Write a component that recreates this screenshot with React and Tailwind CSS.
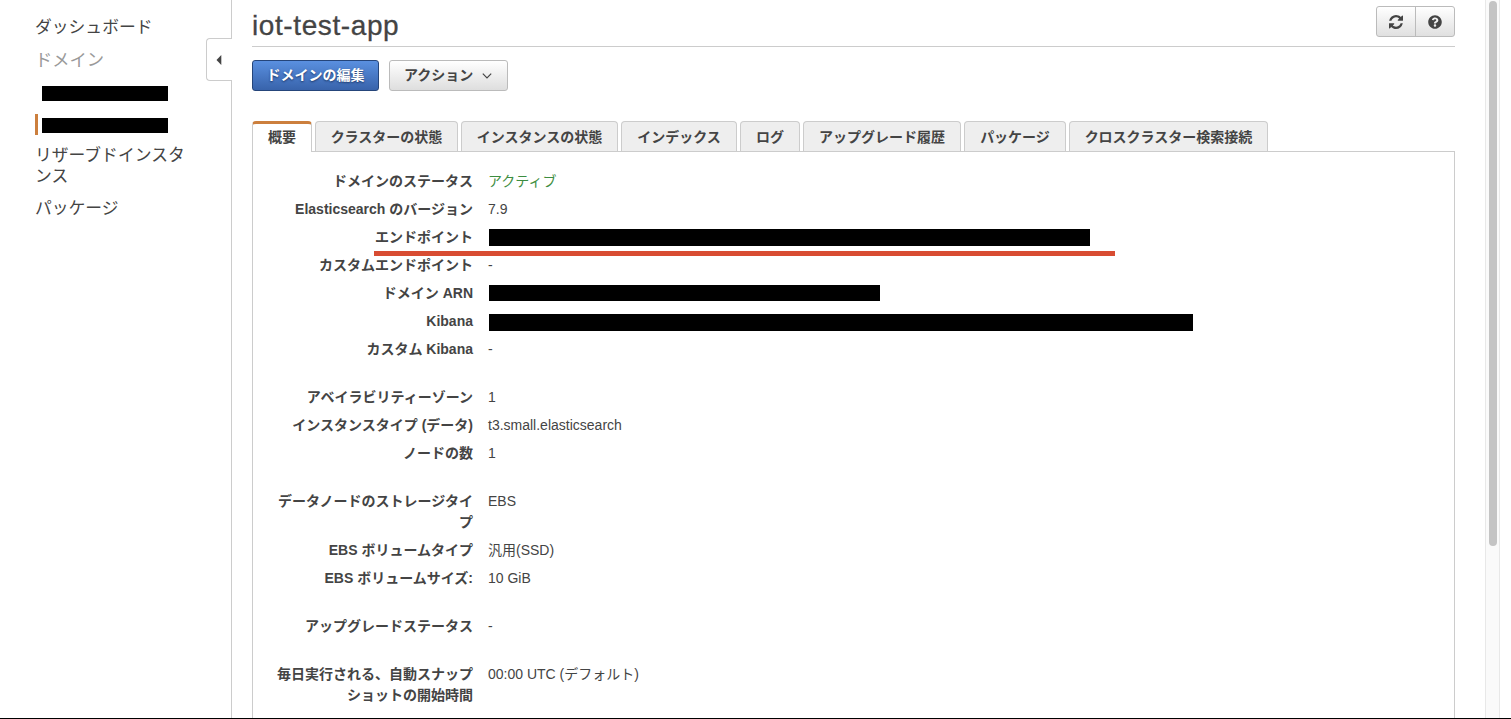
import { FaQuestionCircle } from "react-icons/fa";

const TABS = [
  { label: "クラスターの状態", width: "w-[143px]" },
  { label: "インスタンスの状態", width: "w-[157px]" },
  { label: "インデックス", width: "w-[116px]" },
  { label: "ログ", width: "w-[60px]" },
  { label: "アップグレード履歴", width: "w-[158px]" },
  { label: "パッケージ", width: "w-[102px]" },
  { label: "クロスクラスター検索接続", width: "w-[199px]" },
];

const SECTIONS = [
  [
    { label: "ドメインのステータス", value: "アクティブ", tone: "text-[#3c8d40]" },
    { label: "Elasticsearch のバージョン", value: "7.9" },
    { label: "エンドポイント", mask: "mt-[2px] h-[17px] w-[601px]" },
    { label: "カスタムエンドポイント", value: "-" },
    { label: "ドメイン ARN", mask: "mt-[2px] h-[16px] w-[391px]" },
    { label: "Kibana", mask: "mt-[3px] h-[17px] w-[704px]" },
    { label: "カスタム Kibana", value: "-" },
  ],
  [
    { label: "アベイラビリティーゾーン", value: "1" },
    { label: "インスタンスタイプ (データ)", value: "t3.small.elasticsearch" },
    { label: "ノードの数", value: "1" },
  ],
  [
    { label: "データノードのストレージタイプ", value: "EBS" },
    { label: "EBS ボリュームタイプ", value: "汎用(SSD)" },
    { label: "EBS ボリュームサイズ:", value: "10 GiB" },
  ],
  [{ label: "アップグレードステータス", value: "-" }],
  [{ label: "毎日実行される、自動スナップショットの開始時間", value: "00:00 UTC (デフォルト)" }],
];

function RefreshIcon() {
  return (
    <svg viewBox="0 0 1536 1536" className="size-[14px]" fill="currentColor">
      <path d="M1511 928q0 5-1 7-64 268-268 434.5t-478 166.5q-146 0-282.5-55t-243.5-157l-129 129q-19 19-45 19t-45-19-19-45v-448q0-26 19-45t45-19h448q26 0 45 19t19 45-19 45l-137 137q71 66 161 102t187 36q134 0 250-65t186-179q11-17 53-117 8-23 30-23h192q13 0 22.5 9.5t9.5 22.5zm25-800v448q0 26-19 45t-45 19h-448q-26 0-45-19t-19-45 19-45l138-138q-148-137-349-137-134 0-250 65t-186 179q-11 17-53 117-8 23-30 23h-199q-13 0-22.5-9.5t-9.5-22.5v-7q65-268 270-434.5t480-166.5q146 0 284 55.5t245 156.5l130-129q19-19 45-19t45 19 19 45z" />
    </svg>
  );
}

function Sidebar() {
  return (
    <aside className="flex w-[232px] shrink-0">
      <nav className="w-[171px] shrink-0 pl-[35px] pt-[17px] text-[16.8px] leading-[21px]">
        <div className="w-[155px]">
          <div>ダッシュボード</div>
          <div className="mt-3 text-[17.3px] text-[#999]">ドメイン</div>
          <div className="mt-[15px] ml-[7px] h-[15px] w-[126px] bg-black" />
          <div className="mt-[13px] flex h-[21px] items-center">
            <div className="h-[21px] w-[3px] bg-[#cc7f3d]" />
            <div className="mt-px ml-1 h-[15px] w-[126px] bg-black" />
          </div>
          <div className="mt-[10px] w-[151px] break-all">リザーブドインスタンス</div>
          <div className="mt-[11px]">パッケージ</div>
        </div>
      </nav>
      <div className="ml-[35px] flex w-[26px] flex-col">
        <div className="h-[38px] border-r border-[#ccc]" />
        <div className="flex h-[43px] items-center rounded-l-[4px] border border-r-0 border-[#ccc] pl-[9px]">
          <svg viewBox="0 0 6 10" className="h-[10px] w-[6px]" fill="#444">
            <path d="M0.5 5 5.3 0v10z" />
          </svg>
        </div>
        <div className="flex-1 border-r border-[#ccc]" />
      </div>
    </aside>
  );
}

function Header() {
  return (
    <header className="flex h-[47px] items-start justify-between border-b border-[#ccc]">
      <h1 className="mt-[8px] text-[28px] leading-[35px] tracking-[0.6px] [-webkit-text-stroke:0.3px_#444]">
        iot-test-app
      </h1>
      <div className="mt-[6px] flex h-[31px] w-[79px] rounded-[3px] border border-[#bbb] bg-linear-to-b from-white to-[#e0e0e0]">
        <button className="flex w-[39px] items-center justify-center border-r border-[#bbb]">
          <RefreshIcon />
        </button>
        <button className="flex flex-1 items-center justify-center">
          <FaQuestionCircle className="size-[14px]" />
        </button>
      </div>
    </header>
  );
}

function Tabs() {
  return (
    <div className="mt-[30px] flex h-[31px] gap-[3px] text-center font-bold leading-[21px]">
      <div className="relative z-10 w-[60px] rounded-t-[4px] border border-t-[3px] border-b-0 border-[#ccc] border-t-[#cc7f3d] bg-white pt-[3px]">
        概要
      </div>
      {TABS.map((t) => (
        <div
          key={t.label}
          className={`${t.width} h-[30px] shrink-0 rounded-t-[4px] border border-b-0 border-[#ccc] bg-[#eee] pt-[5px] whitespace-nowrap`}
        >
          {t.label}
        </div>
      ))}
    </div>
  );
}

function Row({ label, value, mask, tone }) {
  return (
    <div className="flex pt-[3px] pb-1">
      <div className="w-[201px] shrink-0 break-all text-right font-bold">{label}</div>
      <div className="ml-[15px]">
        {mask ? (
          <div className={`${mask} ml-px bg-black`} />
        ) : (
          <span className={tone}>{value}</span>
        )}
      </div>
    </div>
  );
}

export default function App() {
  return (
    <div
      lang="ja"
      className="flex h-[719px] w-[1511px] overflow-hidden border-b border-black bg-white font-['Liberation_Sans','Noto_Sans_CJK_JP',sans-serif] text-[14px] text-[#444]"
    >
      <Sidebar />
      <main className="ml-5 flex w-[1203px] shrink-0 flex-col">
        <Header />
        <div className="mt-[13px] flex h-[31px] gap-[10px] font-bold">
          <button className="w-[127px] rounded-[3px] border border-[#25457a] bg-linear-to-b from-[#5a90e0] to-[#3863ab] text-white [text-shadow:0_1px_2px_#1c3768]">
            ドメインの編集
          </button>
          <button className="flex w-[119px] items-center rounded-[3px] border border-[#bbb] bg-linear-to-b from-white to-[#dedede] pl-[14px]">
            アクション
            <svg viewBox="0 0 10 6" className="ml-[9px] h-[6px] w-[10px]" fill="none" stroke="#444" strokeWidth="1.2">
              <path d="M0.8 0.7 5 4.9 9.2 0.7" />
            </svg>
          </button>
        </div>
        <Tabs />
        <section className="relative -mt-px flex flex-1 flex-col gap-5 border border-b-0 border-[#ccc] pt-[16px] pl-[19px] leading-[21px]">
          {SECTIONS.map((rows, i) => (
            <div key={i}>
              {rows.map((r) => (
                <Row key={r.label} {...r} />
              ))}
            </div>
          ))}
          <div className="absolute top-[99px] left-[121px] h-[5px] w-[741px] bg-[#d84c32]" />
        </section>
      </main>
      <div className="ml-[30px] w-[15px] border-x border-[#e8e8e8] bg-[#fafafa] pt-px pl-[3px]">
        <div className="h-[545px] w-2 rounded-full bg-[#c4c4c4]" />
      </div>
    </div>
  );
}
